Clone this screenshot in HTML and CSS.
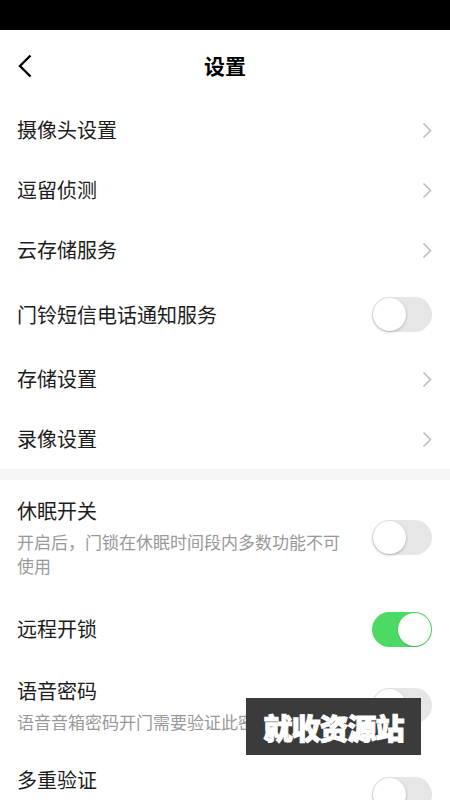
FILE: index.html
```
<!DOCTYPE html>
<html lang="zh">
<head>
  <meta charset="UTF-8">
  <meta name="viewport" content="width=device-width, initial-scale=1">
  <title>设置</title>
  <link rel="stylesheet" href="styles.css">
</head>
<body>
<div class="statusbar"></div>
<div class="header">
  <span class="back">
    <svg width="14" height="24" viewBox="0 0 14 24"><path d="M12.5 1.5 L2 12 L12.5 22.5" fill="none" stroke="#000" stroke-width="2.4"/></svg>
  </span>
  <h1>设置</h1>
</div>

<div class="group">
  <div class="row"><span class="name">摄像头设置</span><svg class="arrow" width="10" height="17" viewBox="0 0 10 17"><path d="M1.5 1.5 L8.5 8.5 L1.5 15.5" fill="none" stroke="#bbb" stroke-width="1.5"/></svg></div>
  <div class="row"><span class="name">逗留侦测</span><svg class="arrow" width="10" height="17" viewBox="0 0 10 17"><path d="M1.5 1.5 L8.5 8.5 L1.5 15.5" fill="none" stroke="#bbb" stroke-width="1.5"/></svg></div>
  <div class="row"><span class="name">云存储服务</span><svg class="arrow" width="10" height="17" viewBox="0 0 10 17"><path d="M1.5 1.5 L8.5 8.5 L1.5 15.5" fill="none" stroke="#bbb" stroke-width="1.5"/></svg></div>
  <div class="row switch-row"><span class="name">门铃短信电话通知服务</span><span class="toggle"></span></div>
  <div class="row"><span class="name">存储设置</span><svg class="arrow" width="10" height="17" viewBox="0 0 10 17"><path d="M1.5 1.5 L8.5 8.5 L1.5 15.5" fill="none" stroke="#bbb" stroke-width="1.5"/></svg></div>
  <div class="row"><span class="name">录像设置</span><svg class="arrow" width="10" height="17" viewBox="0 0 10 17"><path d="M1.5 1.5 L8.5 8.5 L1.5 15.5" fill="none" stroke="#bbb" stroke-width="1.5"/></svg></div>
</div>

<div class="gap"></div>

<div class="group">
  <div class="item first">
    <div class="text">
      <div class="name">休眠开关</div>
      <div class="desc">开启后，门锁在休眠时间段内多数功能不可使用</div>
    </div>
    <span class="toggle"></span>
  </div>
  <div class="item single">
    <div class="text">
      <div class="name">远程开锁</div>
    </div>
    <span class="toggle on"></span>
  </div>
  <div class="item">
    <div class="text">
      <div class="name">语音密码</div>
      <div class="desc">语音音箱密码开门需要验证此密码</div>
    </div>
    <span class="toggle"></span>
  </div>
  <div class="item">
    <div class="text">
      <div class="name">多重验证</div>
      <div class="desc">开启后，开门需要多重验证</div>
    </div>
    <span class="toggle"></span>
  </div>
</div>

<div class="watermark">就收资源站</div>
</body>
</html>
```

FILE: styles.css
```
body { margin: 0; height: 800px; overflow: hidden; background: #fff; font-family: "Noto Sans CJK SC", "Noto Sans", sans-serif; color: #1c1c1c; position: relative; }
.statusbar { height: 30px; background: #000; }
.header { height: 70px; display: flex; align-items: center; justify-content: center; position: relative; }
.header h1 { margin: 0; font-size: 21px; font-weight: bold; color: #000; line-height: 1; }
.back { position: absolute; left: 18px; top: 24px; height: 24px; }
.row { height: 60px; display: flex; align-items: center; justify-content: space-between; padding: 0 18px 0 17px; }
.switch-row { height: 69px; }
.name { font-size: 20px; line-height: 28px; }
.arrow { display: block; margin-right: 0; }
.gap { height: 11px; background: #f5f5f5; }
.item { display: flex; align-items: center; gap: 24px; padding: 17px 18px 15px 17px; }
.item.first { padding-bottom: 20px; }
.item.single { padding: 17px 18px 17px 17px; }
.item.single .toggle { margin: -4px 0; }
.text { flex: 1; }
.desc { font-size: 17px; line-height: 24px; color: #999; margin-top: 5px; }
.toggle { flex: none; width: 60px; height: 35px; border-radius: 18px; background: #e6e6e6; position: relative; box-sizing: border-box; }
.toggle::after { content: ""; position: absolute; left: 1px; top: 1px; width: 33px; height: 33px; border-radius: 50%; background: #fff; box-shadow: 0 1px 3px rgba(0,0,0,0.25); }
.toggle.on { background: #4cd964; }
.toggle.on::after { left: 26px; box-shadow: 0 1px 2px rgba(0,0,0,0.15); }
.watermark { position: absolute; left: 246px; top: 698px; width: 175px; height: 57px; background: #3b3b3b; color: #fff; font-size: 29px; font-weight: 900; display: flex; align-items: center; justify-content: center; letter-spacing: -1px; -webkit-text-stroke: 1px #fff; }
```
